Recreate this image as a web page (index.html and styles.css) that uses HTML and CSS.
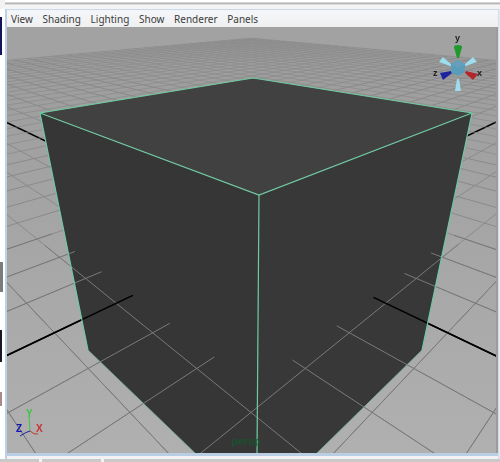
FILE: index.html
```html
<!DOCTYPE html>
<html lang="en">
<head>
  <meta charset="UTF-8">
  <title>Viewport</title>
  <link rel="stylesheet" href="styles.css">
</head>
<body>

<div class="top-strip"></div>

<div class="middle">
  <div class="left-strip">
    <div class="seg seg-navy"></div>
    <div class="seg seg-white"></div>
    <div class="seg seg-gray"></div>
    <div class="seg seg-white2"></div>
    <div class="seg seg-navy2"></div>
    <div class="seg seg-pink"></div>
    <div class="seg seg-rest"></div>
  </div>

  <div class="panel">
    <div class="menu">
      <span>View</span>
      <span>Shading</span>
      <span>Lighting</span>
      <span>Show</span>
      <span>Renderer</span>
      <span>Panels</span>
    </div>

    <svg class="viewport" viewBox="7 27 489 426" width="489" height="426">
      <defs>
        <linearGradient id="floorFill" x1="0" y1="0" x2="0" y2="1">
          <stop offset="0" stop-color="#9c9c9c"/>
          <stop offset="1" stop-color="#b0b0b0"/>
        </linearGradient>
      </defs>

      <rect x="7" y="27" width="489" height="426" fill="#a2a2a2"/>
      <polygon points="7,60 251,38 496,60 496,453 7,453" fill="url(#floorFill)"/>
      <g id="floorGrid"></g>

      <!-- cube -->
      <polygon class="side" points="40,113 259,195 257,453 195,453 88,350"/>
      <polygon class="side side-right" points="472,113 259,195 257,453 317,453 422,350"/>
      <polygon class="top-face" points="40,113 253,78 472,113 259,195"/>
      <g id="cubeGrid"></g>
      <polyline class="edge" points="88,350 40,113 253,78 472,113 422,350"/>
      <polyline class="edge" points="40,113 259,195 472,113"/>
      <line class="edge" x1="259" y1="195" x2="257" y2="453"/>
      <polyline class="edge edge-low" points="88,350 195,453"/>
      <polyline class="edge edge-low" points="422,350 317,453"/>

      <text class="persp" x="231" y="445">persp</text>

      <!-- view cube -->
      <g class="gizmo">
        <polygon fill="#1f9a2c" points="454,47 462,47 459,58 457,58"/>
        <ellipse fill="#1f9a2c" cx="458" cy="47" rx="4" ry="2"/>
        <polygon fill="#9edcf0" points="439,62 443,57 452,65 450,66"/>
        <polygon fill="#9edcf0" points="477,62 473,57 464,65 466,66"/>
        <polygon fill="#9edcf0" points="455,91 461,91 459,79 457,79"/>
        <polygon fill="#b3262a" points="473,80 478,74 466,71 465,73"/>
        <polygon fill="#1c22a0" points="440,73 443,80 452,73 451,71"/>
        <polygon fill="#5a9dbb" points="458,60 465,64 465,72 458,76 451,72 451,64"/>
        <polygon fill="#659fbb" points="458,60 465,64 458,68 451,64"/>
        <text class="gizmo-label" x="455" y="41">y</text>
        <text class="gizmo-label" x="433" y="76">z</text>
        <text class="gizmo-label" x="477" y="76">x</text>
      </g>

      <!-- corner axes -->
      <g class="axes">
        <path d="M30 431 L29 416" stroke="#45c24a"/>
        <path d="M30 431 Q26 432 20 436" stroke="#1c22a0"/>
        <path d="M30 431 Q34 435 38 434" stroke="#c8332e"/>
        <text class="axis-label" x="26" y="417" fill="#3cc444">Y</text>
        <text class="axis-label" x="16" y="432" fill="#1414b4">Z</text>
        <text class="axis-label" x="36" y="432" fill="#cc3030">X</text>
      </g>
    </svg>

    <div class="panel-foot"></div>
  </div>

  <div class="right-strip"></div>
</div>

<div class="bottom-strip">
  <div class="tab tab-first"></div>
  <div class="tab tab-second"></div>
  <div class="tab tab-third"></div>
</div>

<script src="script.js"></script>
</body>
</html>
```

FILE: styles.css
```css
html, body { margin: 0; padding: 0; }
body { width: 500px; height: 462px; overflow: hidden; background-color: #f2f2f2; display: flex; flex-direction: column; font-family: "Noto Sans", Arial, sans-serif; }

.top-strip { height: 9px; flex: none; box-sizing: border-box; margin-left: 5px; background: linear-gradient(#ffffff 0, #ffffff 2px, #a9a9a9 3px, #c4c4c4 4px, #f4f4f4 5px, #f4f4f4 100%); }

.middle { display: flex; height: 450px; flex: none; }

.left-strip { width: 5px; flex: none; display: flex; flex-direction: column; background-color: #ffffff; }
.seg { width: 100%; }
.seg-navy { height: 38px; width: 2px; margin-top: 8px; background-color: #14145c; }
.seg-white { height: 207px; }
.seg-gray { height: 30px; width: 3px; background-color: #7c7c7c; }
.seg-white2 { height: 38px; }
.seg-navy2 { height: 32px; width: 2px; background-color: #181828; }
.seg-pink { height: 14px; width: 2px; margin-top: 30px; background-color: #a88a8c; }
.seg-rest { flex: 1; }

.panel { flex: none; width: 493px; border-left: 2px solid #bcd0e6; box-sizing: border-box; display: flex; flex-direction: column; }

.menu { height: 18px; flex: none; box-sizing: border-box; padding-left: 4px; display: flex; align-items: center; gap: 9.7px; border-top: 1px solid #c8d8ea; background: linear-gradient(#f4f7fa, #efefef); font-size: 10px; color: #3c3c3c; }

.viewport { display: block; flex: none; border-right: 2px solid #9c9c9c; filter: blur(0.35px); }

.panel-foot { height: 3px; flex: none; background-color: #b9cde4; }

.right-strip { flex: 1; background: linear-gradient(90deg, #c8d8ea, #f0f0f0); }

.bottom-strip { flex: 1; display: flex; gap: 3px; align-items: flex-end; }
.tab { height: 3px; background-color: #c9c9c9; }
.tab-first { width: 39px; }
.tab-second { width: 59px; }
.tab-third { flex: 1; }

.side { fill: #363636; }
.side-right { fill: #383838; }
.top-face { fill: #414141; }

.edge { fill: none; stroke: #6fcaa2; stroke-width: 1.2; }
.edge-low { stroke: #6fae93; stroke-width: 0.8; }

.persp { font-family: "Liberation Sans", Arial, sans-serif; font-size: 11px; font-weight: bold; fill: #1a5230; }

.gizmo-label { font-family: "Liberation Sans", Arial, sans-serif; font-size: 9px; font-weight: bold; fill: #1e1e1e; }

.axes path { fill: none; stroke-width: 1; }
.axis-label { font-family: "Liberation Sans", Arial, sans-serif; font-size: 10px; font-weight: bold; }
```

FILE: script.js
```js
// floor grid in perspective: two families of lines going to two vanishing points
const cx = 251;
const spread = 520;
const horizon = -9;
const ns = "http://www.w3.org/2000/svg";

function reach(n) {
  return 1 / (0.004032 + 0.000553 * n);
}

function point(i, j) {
  const a = reach(i);
  const b = reach(j);
  const x = cx + spread * (a - b) / (a + b);
  const y = horizon + a * (cx + spread - x) / spread;
  return [x, y];
}

function addLine(group, p, q, color, width) {
  const l = document.createElementNS(ns, "line");
  l.setAttribute("x1", p[0].toFixed(1));
  l.setAttribute("y1", p[1].toFixed(1));
  l.setAttribute("x2", q[0].toFixed(1));
  l.setAttribute("y2", q[1].toFixed(1));
  l.setAttribute("stroke", color);
  l.setAttribute("stroke-width", width);
  group.appendChild(l);
}

const floorGrid = document.getElementById("floorGrid");
const cubeGrid = document.getElementById("cubeGrid");

for (let n = -7; n <= 31; n++) {
  const color = n === 0 ? "#000000" : "#8a8a8a";
  const width = n === 0 ? 1.6 : (n > 8 ? 0.7 : 1);
  addLine(floorGrid, point(n, 31), point(n, -7), color, width);
  addLine(floorGrid, point(31, n), point(-7, n), color, width);

  if (n <= 3) {
    const from = n <= -3 ? 2.7 : -2.7;
    const overColor = n === 0 ? "#000000" : "#7a7a7a";
    addLine(cubeGrid, point(n, from), point(n, -7), overColor, width);
    // the lines on the right side stop a little nearer than on the left
    addLine(cubeGrid, point(from - 0.08, n), point(-7, n), overColor, width);
  }
}
```
